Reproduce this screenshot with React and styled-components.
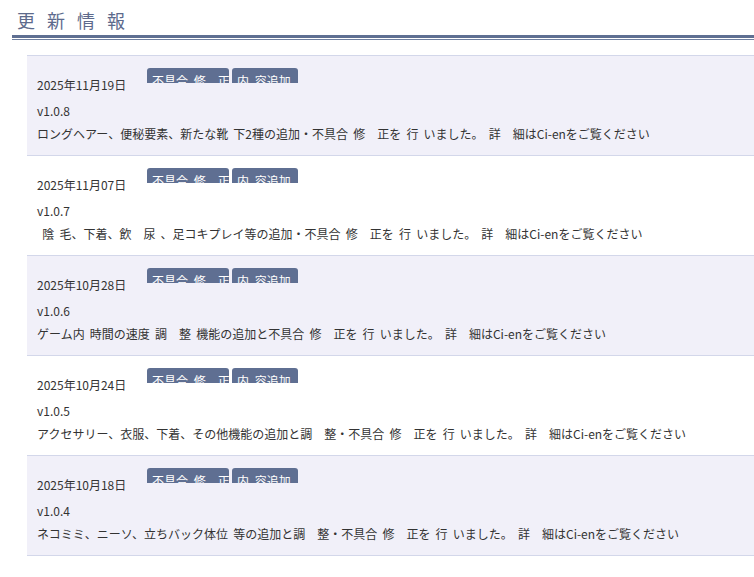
import React from "react";
import styled, { createGlobalStyle } from "styled-components";

const Global = createGlobalStyle`
  html, body { margin: 0; padding: 0; background: #fff; }
  body {
    font-family: "Noto Sans CJK JP", "Noto Sans", sans-serif;
    color: #333;
    overflow: hidden;
  }
`;

const Page = styled.div`
  padding: 8px 0 0 12px;
`;

const Heading = styled.h2`
  margin: 0;
  padding: 0 0 2px 5px;
  font-size: 18px;
  line-height: 25px;
  font-weight: 400;
  letter-spacing: 4px;
  color: #5d6a8c;
  border-bottom: 3px solid #5f6f92;
  box-shadow: 0 1px 0 #fff, 0 2px 0 #6f7fa0;
`;

const List = styled.ul`
  list-style: none;
  margin: 17px 0 0 15px;
  padding: 0;
  border-bottom: 1px solid #d3d7ea;
`;

const Item = styled.li`
  background: ${(p) => (p.$alt ? "#fff" : "#f1f0f9")};
  border-top: 1px solid #d3d7ea;
  padding: 12px 10px 12px 10px;
  font-size: 12px;
  line-height: 18px;
`;

const Head = styled.div`
  display: flex;
  align-items: flex-start;
`;

const Date = styled.span`
  width: 110px;
  padding-top: 8px;
`;

const Tags = styled.div`
  display: flex;
  gap: 3px;
`;

const Tag = styled.span`
  display: block;
  height: 15px;
  overflow: hidden;
  box-sizing: border-box;
  padding: 4px 0 0 5px;
  width: ${(p) => p.$w}px;
  background: #5f6f92;
  color: #fff;
  border-radius: 3px 3px 0 0;
  font-size: 12px;
  line-height: 18px;
  word-spacing: 3px;
  white-space: pre;
`;

const Version = styled.div`
  margin-top: 8px;
`;

const Desc = styled.div`
  margin-top: 5px;
  white-space: pre;
  word-spacing: 2.5px;
`;

const items = [
  {
    date: "2025年11月19日",
    ver: "v1.0.8",
    desc: "ロングヘアー、便秘要素、新たな靴 下2種の追加・不具合 修　正を 行 いました。 詳　細はCi-enをご覧ください",
  },
  {
    date: "2025年11月07日",
    ver: "v1.0.7",
    desc: " 陰 毛、下着、飲　尿 、足コキプレイ等の追加・不具合 修　正を 行 いました。 詳　細はCi-enをご覧ください",
  },
  {
    date: "2025年10月28日",
    ver: "v1.0.6",
    desc: "ゲーム内 時間の速度 調　整 機能の追加と不具合 修　正を 行 いました。 詳　細はCi-enをご覧ください",
  },
  {
    date: "2025年10月24日",
    ver: "v1.0.5",
    desc: "アクセサリー、衣服、下着、その他機能の追加と調　整・不具合 修　正を 行 いました。 詳　細はCi-enをご覧ください",
  },
  {
    date: "2025年10月18日",
    ver: "v1.0.4",
    desc: "ネコミミ、ニーソ、立ちバック体位 等の追加と調　整・不具合 修　正を 行 いました。 詳　細はCi-enをご覧ください",
  },
];

export default function App() {
  return (
    <Page>
      <Global />
      <Heading>更 新 情 報</Heading>
      <List>
        {items.map((it, i) => (
          <Item key={it.ver} $alt={i % 2 === 1}>
            <Head>
              <Date>{it.date}</Date>
              <Tags>
                <Tag $w={82}>{"不具合 修　正"}</Tag>
                <Tag $w={66}>{"内 容追加"}</Tag>
              </Tags>
            </Head>
            <Version>{it.ver}</Version>
            <Desc>{it.desc}</Desc>
          </Item>
        ))}
      </List>
    </Page>
  );
}
